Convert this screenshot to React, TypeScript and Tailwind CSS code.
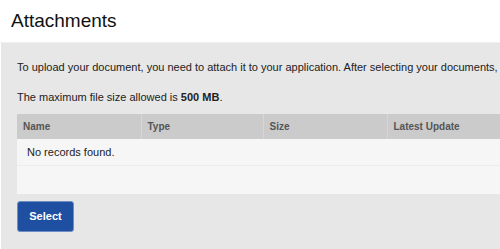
export default function App() {
  return (
    <div className="w-[500px] h-[249px] overflow-hidden bg-white font-['Liberation_Sans',Arial,sans-serif] text-[#222]">
      <div className="h-[43px] px-[11px] pt-[9px] border-b border-[#f0f0f0]">
        <h1 className="text-[19px] leading-[24px] text-[#111]">Attachments</h1>
      </div>
      <div className="ml-px h-[206px] bg-[#e7e7e7] pl-4 pt-[16px]">
        <p className="text-[11px] leading-[16px] whitespace-nowrap">
          To upload your document, you need to attach it to your application. After selecting your documents,
        </p>
        <p className="mt-[14px] text-[11px] leading-[16px] whitespace-nowrap">
          The maximum file size allowed is <b>500 MB</b>.
        </p>
        <table className="mt-[9px] w-[500px] border-collapse">
          <thead>
            <tr className="h-[25px] bg-[#cbcbcb] text-left text-[10px] text-[#555]">
              <th className="w-[124px] border-r border-[#d6d6d6] px-[6px] font-bold">Name</th>
              <th className="w-[122px] border-r border-[#d6d6d6] px-[6px] font-bold">Type</th>
              <th className="w-[124px] border-r border-[#d6d6d6] px-[6px] font-bold">Size</th>
              <th className="px-[6px] font-bold">Latest Update</th>
            </tr>
          </thead>
          <tbody>
            <tr className="h-[26px] bg-[#f6f6f6] border-b border-[#ececec]">
              <td colSpan={4} className="px-[10px] text-[11px] text-[#222]">No records found.</td>
            </tr>
            <tr className="h-[29px] bg-[#f6f6f6]">
              <td colSpan={4}></td>
            </tr>
          </tbody>
        </table>
        <button className="mt-[7px] h-[31px] w-[57px] rounded-[3px] border border-[#6f8fc4] bg-[#1f4fa1] text-[11px] font-bold text-white">
          Select
        </button>
      </div>
    </div>
  );
}
